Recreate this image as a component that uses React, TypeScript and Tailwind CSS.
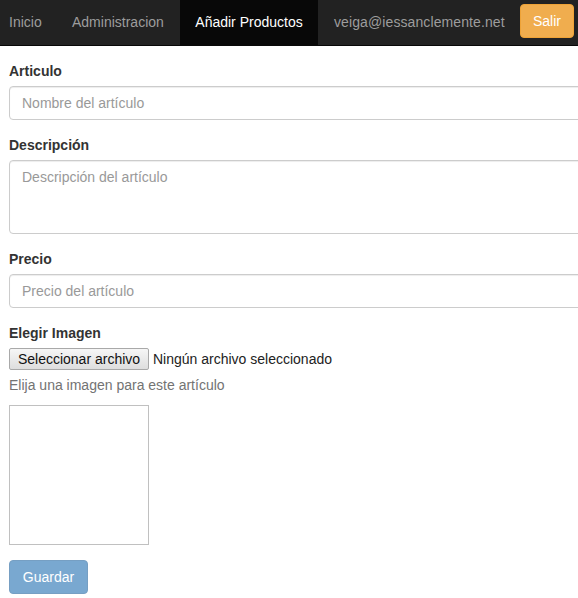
const App = () => {
  return (
    <div className="w-[578px] h-[598px] overflow-hidden bg-white font-['Liberation_Sans',Arial,sans-serif] text-[14px] text-[#333]">
      {/* Barra de navegación */}
      <nav className="h-[46px] bg-[#222] border-b border-[#080808] flex items-stretch">
        <ul className="flex items-stretch">
          <li className="flex items-center w-[60px] pl-[9px] text-[#9d9d9d]">Inicio</li>
          <li className="flex items-center w-[120px] pl-[12px] text-[#9d9d9d]">Administracion</li>
          <li className="flex items-center justify-center w-[138px] bg-[#080808] text-white">Añadir Productos</li>
          <li className="flex items-center w-[202px] pl-[16px] text-[#9d9d9d] tracking-[0.1px]">veiga@iessanclemente.net</li>
        </ul>
        <div className="flex items-start pt-[4px]">
          <button className="h-[34px] w-[54px] rounded-[4px] bg-[#f0ad4e] border border-[#eea236] text-white">
            Salir
          </button>
        </div>
      </nav>

      {/* Formulario */}
      <form className="pl-[9px] pt-[15px] w-[620px]">
        <div className="mb-[15px]">
          <label className="block font-bold leading-[20px] mb-[5px]">Articulo</label>
          <input
            className="block w-full h-[34px] px-[12px] border border-[#ccc] rounded-[4px] shadow-[inset_0_1px_1px_rgba(0,0,0,0.075)] placeholder:text-[#999] outline-none"
            placeholder="Nombre del artículo"
          />
        </div>
        <div className="mb-[15px]">
          <label className="block font-bold leading-[20px] mb-[5px]">Descripción</label>
          <textarea
            className="block w-full h-[74px] px-[12px] py-[6px] leading-[20px] border border-[#ccc] rounded-[4px] shadow-[inset_0_1px_1px_rgba(0,0,0,0.075)] placeholder:text-[#999] outline-none resize-none"
            placeholder="Descripción del artículo"
          />
        </div>
        <div className="mb-[15px]">
          <label className="block font-bold leading-[20px] mb-[5px]">Precio</label>
          <input
            className="block w-full h-[34px] px-[12px] border border-[#ccc] rounded-[4px] shadow-[inset_0_1px_1px_rgba(0,0,0,0.075)] placeholder:text-[#999] outline-none"
            placeholder="Precio del artículo"
          />
        </div>
        <div className="mb-[15px]">
          <label className="block font-bold leading-[20px] mb-[5px]">Elegir Imagen</label>
          <div className="flex items-center h-[22px] text-[#222]">
            <span className="h-[22px] w-[140px] flex items-center justify-center border border-[#a9a9a9] rounded-[2px] bg-gradient-to-b from-[#f6f6f6] to-[#dedede] text-[#111]">
              Seleccionar archivo
            </span>
            <span className="ml-[4px]">Ningún archivo seleccionado</span>
          </div>
          <p className="mt-[5px] mb-[10px] leading-[20px] text-[#737373]">Elija una imagen para este artículo</p>
          <div className="w-[140px] h-[140px] border border-[#c0c0c0]"></div>
        </div>
        <button
          type="button"
          className="h-[34px] w-[79px] rounded-[4px] bg-[#337ab7] border border-[#2e6da4] text-white opacity-65"
        >
          Guardar
        </button>
      </form>
    </div>
  );
};

export default App;
